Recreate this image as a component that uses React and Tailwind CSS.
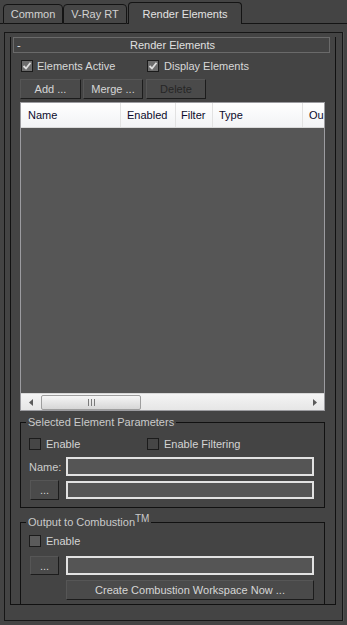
import React from 'react';

const Check = ({ checked, filled }) => (
    <div
        className={
            'w-[12px] h-[12px] border border-[#1b1b1b] flex items-center justify-center shrink-0 ' +
            (checked ? 'bg-[#6c6c6c]' : filled ? 'bg-[#5b5b5b]' : 'bg-[#464646]')
        }
    >
        {checked && (
            <svg width="10" height="10" viewBox="0 0 10 10">
                <path d="M1.5 5 L4 7.5 L8.5 1.8" fill="none" stroke="#dedede" strokeWidth="1.8" />
            </svg>
        )}
    </div>
);

const Btn = ({ children, className = '', disabled }) => (
    <div
        className={
            'flex items-center justify-center bg-[#4a4a4a] border border-t-[#565656] border-l-[#565656] border-b-[#1c1c1c] border-r-[#1c1c1c] ' +
            (disabled ? 'text-[#262626] ' : 'text-[#d6d6d6] ') +
            className
        }
    >
        {children}
    </div>
);

const Field = ({ className = '' }) => (
    <div className={'bg-[#555555] border-2 border-[#e2e2e2] ' + className}></div>
);

const Tab = ({ label, active, className = '' }) => (
    <div
        className={
            'flex items-center justify-center border-x border-t border-[#141414] rounded-t-[4px] ' +
            (active ? 'h-[22px] text-[#e2e2e2] bg-[#444444] ' : 'h-[20px] border-b text-[#d2d2d2] bg-[#464646] ') +
            className
        }
    >
        {label}
    </div>
);

const App = () => {
    return (
        <div
            className="w-[347px] h-[625px] bg-[#444444] overflow-hidden text-[11px] leading-[14px]"
            style={{ fontFamily: '"Liberation Sans", Arial, sans-serif' }}
        >
            {/* tabs */}
            <div className="flex items-end h-[24px]">
                <div className="w-[3px] h-px border-b border-[#141414]"></div>
                <Tab label="Common" className="w-[60px]" />
                <Tab label="V-Ray RT" className="w-[64px]" />
                <div className="w-[1px] h-px border-b border-[#141414]"></div>
                <Tab label="Render Elements" active className="w-[114px]" />
                <div className="flex-1 h-px border-b border-[#141414]"></div>
            </div>

            {/* panel */}
            <div className="mt-[8px] ml-[4px] w-[339px] h-[589px] border border-[#161616] shadow-[1px_0_0_#525252]">
                <div className="mt-[12px] ml-[5px] w-[326px] h-[568px] border-x border-b border-[#111111]">
                    <div className="-mt-[8px] ml-[2px] w-[317px] h-[16px] border border-[#6a6a6a] bg-[#444444] flex items-center relative text-[#e0e0e0]">
                        <span className="absolute left-[3px] top-[0px]">-</span>
                        <span className="flex-1 text-center pl-[2px]">Render Elements</span>
                    </div>

                    <div className="ml-[9px] w-[305px]">
                        <div className="mt-[6px] h-[13px] flex items-center text-[#d8d8d8]">
                            <div className="w-[127px] flex items-center gap-[4px] pl-[1px]">
                                <Check checked />
                                <span>Elements Active</span>
                            </div>
                            <div className="flex items-center gap-[5px]">
                                <Check checked />
                                <span>Display Elements</span>
                            </div>
                        </div>

                        <div className="mt-[7px] flex h-[20px]">
                            <Btn className="w-[61px]">Add ...</Btn>
                            <Btn className="ml-[2px] w-[60px]">Merge ...</Btn>
                            <Btn className="ml-[3px] w-[60px]" disabled>Delete</Btn>
                        </div>

                        {/* list view */}
                        <div className="mt-[3px] h-[309px] border border-[#9c9ca0] flex flex-col">
                            <div className="h-[25px] flex bg-gradient-to-b from-[#ffffff] to-[#f2f3f5] border-b border-[#dadada] text-[#0c0c2c] overflow-hidden">
                                <div className="w-[100px] shrink-0 pl-[7px] flex items-center border-r border-[#e2e2e2]">Name</div>
                                <div className="w-[55px] shrink-0 pl-[6px] flex items-center border-r border-[#e2e2e2]">Enabled</div>
                                <div className="w-[37px] shrink-0 pl-[5px] flex items-center border-r border-[#e2e2e2]">Filter</div>
                                <div className="w-[90px] shrink-0 pl-[6px] flex items-center border-r border-[#e2e2e2]">Type</div>
                                <div className="flex-1 pl-[6px] flex items-center">Ou</div>
                            </div>
                            <div className="flex-1 bg-[#565656]"></div>
                            <div className="h-[17px] bg-gradient-to-b from-[#f4f4f4] to-[#e6e6e6] border-t border-[#d8d8d8] flex items-center">
                                <div className="w-[20px] flex items-center justify-center">
                                    <svg width="5" height="7" viewBox="0 0 5 7">
                                        <path d="M4 0 L0 3.5 L4 7 Z" fill="#5a5a5a" />
                                    </svg>
                                </div>
                                <div className="w-[100px] h-[15px] rounded-[2px] border border-[#9e9e9e] bg-gradient-to-b from-[#f6f6f6] to-[#d6d6d6] flex items-center justify-center">
                                    <svg width="7" height="7" viewBox="0 0 7 7">
                                        <path d="M0.5 0 V7 M3.5 0 V7 M6.5 0 V7" stroke="#7a7a7a" strokeWidth="1" />
                                    </svg>
                                </div>
                                <div className="flex-1"></div>
                                <div className="w-[20px] flex items-center justify-center">
                                    <svg width="5" height="7" viewBox="0 0 5 7">
                                        <path d="M1 0 L5 3.5 L1 7 Z" fill="#5a5a5a" />
                                    </svg>
                                </div>
                            </div>
                        </div>

                        {/* selected element parameters */}
                        <fieldset className="mt-[4px] border border-[#111111] pl-[8px] pr-[10px] pb-[7px]">
                            <legend className="ml-[-3px] px-[2px] text-[#cacaca]">Selected Element Parameters</legend>
                            <div className="mt-[9px] h-[12px] flex items-center text-[#d4d4d4]">
                                <div className="w-[118px] flex items-center gap-[5px]">
                                    <Check />
                                    <span>Enable</span>
                                </div>
                                <div className="flex items-center gap-[5px]">
                                    <Check />
                                    <span>Enable Filtering</span>
                                </div>
                            </div>
                            <div className="mt-[7px] h-[19px] flex items-center">
                                <span className="w-[37px] text-[#cccccc]">Name:</span>
                                <Field className="flex-1 h-[19px]" />
                            </div>
                            <div className="mt-[4px] h-[20px] flex items-center">
                                <Btn className="ml-[1px] w-[29px] h-[20px]">...</Btn>
                                <Field className="ml-[7px] flex-1 h-[18px]" />
                            </div>
                        </fieldset>

                        {/* output to combustion */}
                        <fieldset className="mt-[7px] border border-[#111111] pl-[8px] pr-[10px] pb-[4px]">
                            <legend className="ml-[-3px] px-[2px] text-[#cacaca]">
                                Output to Combustion<sup className="text-[10px] top-[-4px]">TM</sup>
                            </legend>
                            <div className="mt-[6px] h-[12px] flex items-center gap-[5px] text-[#d4d4d4]">
                                <Check filled />
                                <span>Enable</span>
                            </div>
                            <div className="mt-[9px] h-[19px] flex items-center">
                                <Btn className="ml-[1px] w-[29px] h-[19px]">...</Btn>
                                <Field className="ml-[7px] flex-1 h-[19px]" />
                            </div>
                            <div className="mt-[5px] flex">
                                <Btn className="ml-[37px] flex-1 h-[20px]">Create Combustion Workspace Now ...</Btn>
                            </div>
                        </fieldset>
                    </div>
                </div>
            </div>
        </div>
    );
};

export default App;
